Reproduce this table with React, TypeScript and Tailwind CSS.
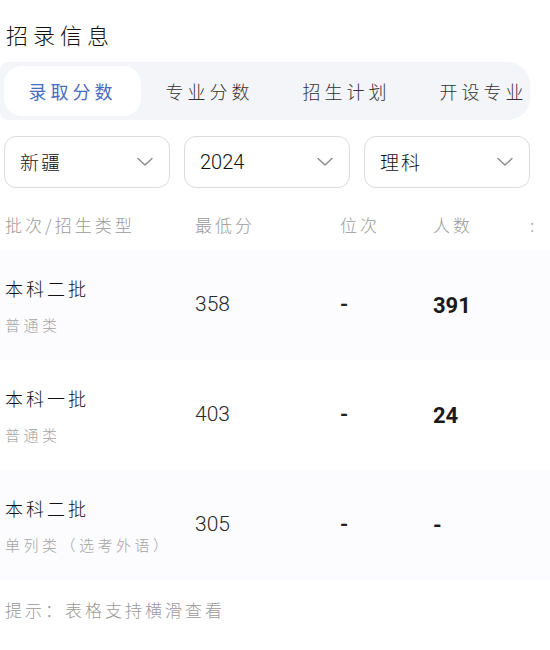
import React from "react";

const cjk = { fontFamily: '"Noto Sans CJK SC", "Noto Sans", sans-serif' };
const num = { fontFamily: 'Roboto, "Noto Sans", sans-serif' };

function Chevron() {
  return (
    <svg width="18" height="10" viewBox="0 0 18 10" fill="none">
      <path d="M2 1.5 L9 8 L16 1.5" stroke="#8a8a8a" strokeWidth="1.4" strokeLinecap="round" strokeLinejoin="round" />
    </svg>
  );
}

const rows = [
  { a: "本科二批", b: "普通类", min: "358", rank: "-", n: "391", bg: true },
  { a: "本科一批", b: "普通类", min: "403", rank: "-", n: "24", bg: false },
  { a: "本科二批", b: "单列类（选考外语）", min: "305", rank: "-", n: "-", bg: true },
];

export default function App() {
  return (
    <div className="w-[550px] h-[650px] overflow-hidden bg-white text-[#222] font-light" style={cjk}>
      <div className="pl-[6px] pt-[19px] h-[62px] text-[22px] leading-[30px] tracking-[5px] text-[#111]">
        招录信息
      </div>
      <div className="w-[530px] h-[58px] bg-[#f3f5f8] rounded-r-[22px] rounded-l-[8px] p-[4px] flex overflow-hidden">
        {["录取分数", "专业分数", "招生计划", "开设专业"].map((t, i) => (
          <div
            key={t}
            className={
              "shrink-0 w-[137px] h-full flex items-center justify-center text-[18px] tracking-[4px] " +
              (i === 0 ? "bg-white rounded-[18px] text-[#4a6cc0] font-normal" : "text-[#333]")
            }
          >
            {t}
          </div>
        ))}
      </div>
      <div className="flex gap-[14px] pl-[4px] mt-[16px]">
        {["新疆", "2024", "理科"].map((t) => (
          <div
            key={t}
            className="w-[166px] h-[52px] border border-[#dcdcdc] rounded-[12px] flex items-center justify-between pl-[15px] pr-[15px]"
          >
            <span
              className="text-[19px] text-[#111] tracking-[2px]"
              style={t === "2024" ? { fontFamily: 'Roboto, sans-serif', fontWeight: 300, letterSpacing: 0, fontSize: 20 } : undefined}
            >
              {t}
            </span>
            <Chevron />
          </div>
        ))}
      </div>
      <div className="flex items-center h-[50px] mt-[12px] text-[17px] text-[#9a9a9a] tracking-[3px]">
        <div className="w-[195px] pl-[5px]">批次/招生类型</div>
        <div className="w-[145px]">最低分</div>
        <div className="w-[93px]">位次</div>
        <div className="w-[97px]">人数</div>
        <div>:</div>
      </div>
      <div className="flex flex-col">
        {rows.map((r, i) => (
          <div key={i} className={"flex items-center h-[110px] " + (r.bg ? "bg-[#fcfcfe]" : "bg-white")}>
            <div className="w-[195px] pl-[5px] flex flex-col gap-[15px]">
              <div className="text-[18px] leading-[24px] tracking-[3px] text-[#111]">{r.a}</div>
              <div className="text-[15px] leading-[20px] tracking-[3.5px] text-[#a5a5a5] whitespace-nowrap">{r.b}</div>
            </div>
            <div className="w-[145px] text-[21px] font-light text-[#2a2a2a]" style={num}>{r.min}</div>
            <div className="w-[93px] text-[21px] font-bold text-[#222]" style={num}>{r.rank}</div>
            <div className="w-[97px] text-[22px] font-bold text-[#1a1a1a]" style={num}>{r.n}</div>
          </div>
        ))}
      </div>
      <div className="pl-[5px] mt-[17px] text-[17px] tracking-[3px] text-[#9a9a9a]">
        提示：表格支持横滑查看
      </div>
    </div>
  );
}
